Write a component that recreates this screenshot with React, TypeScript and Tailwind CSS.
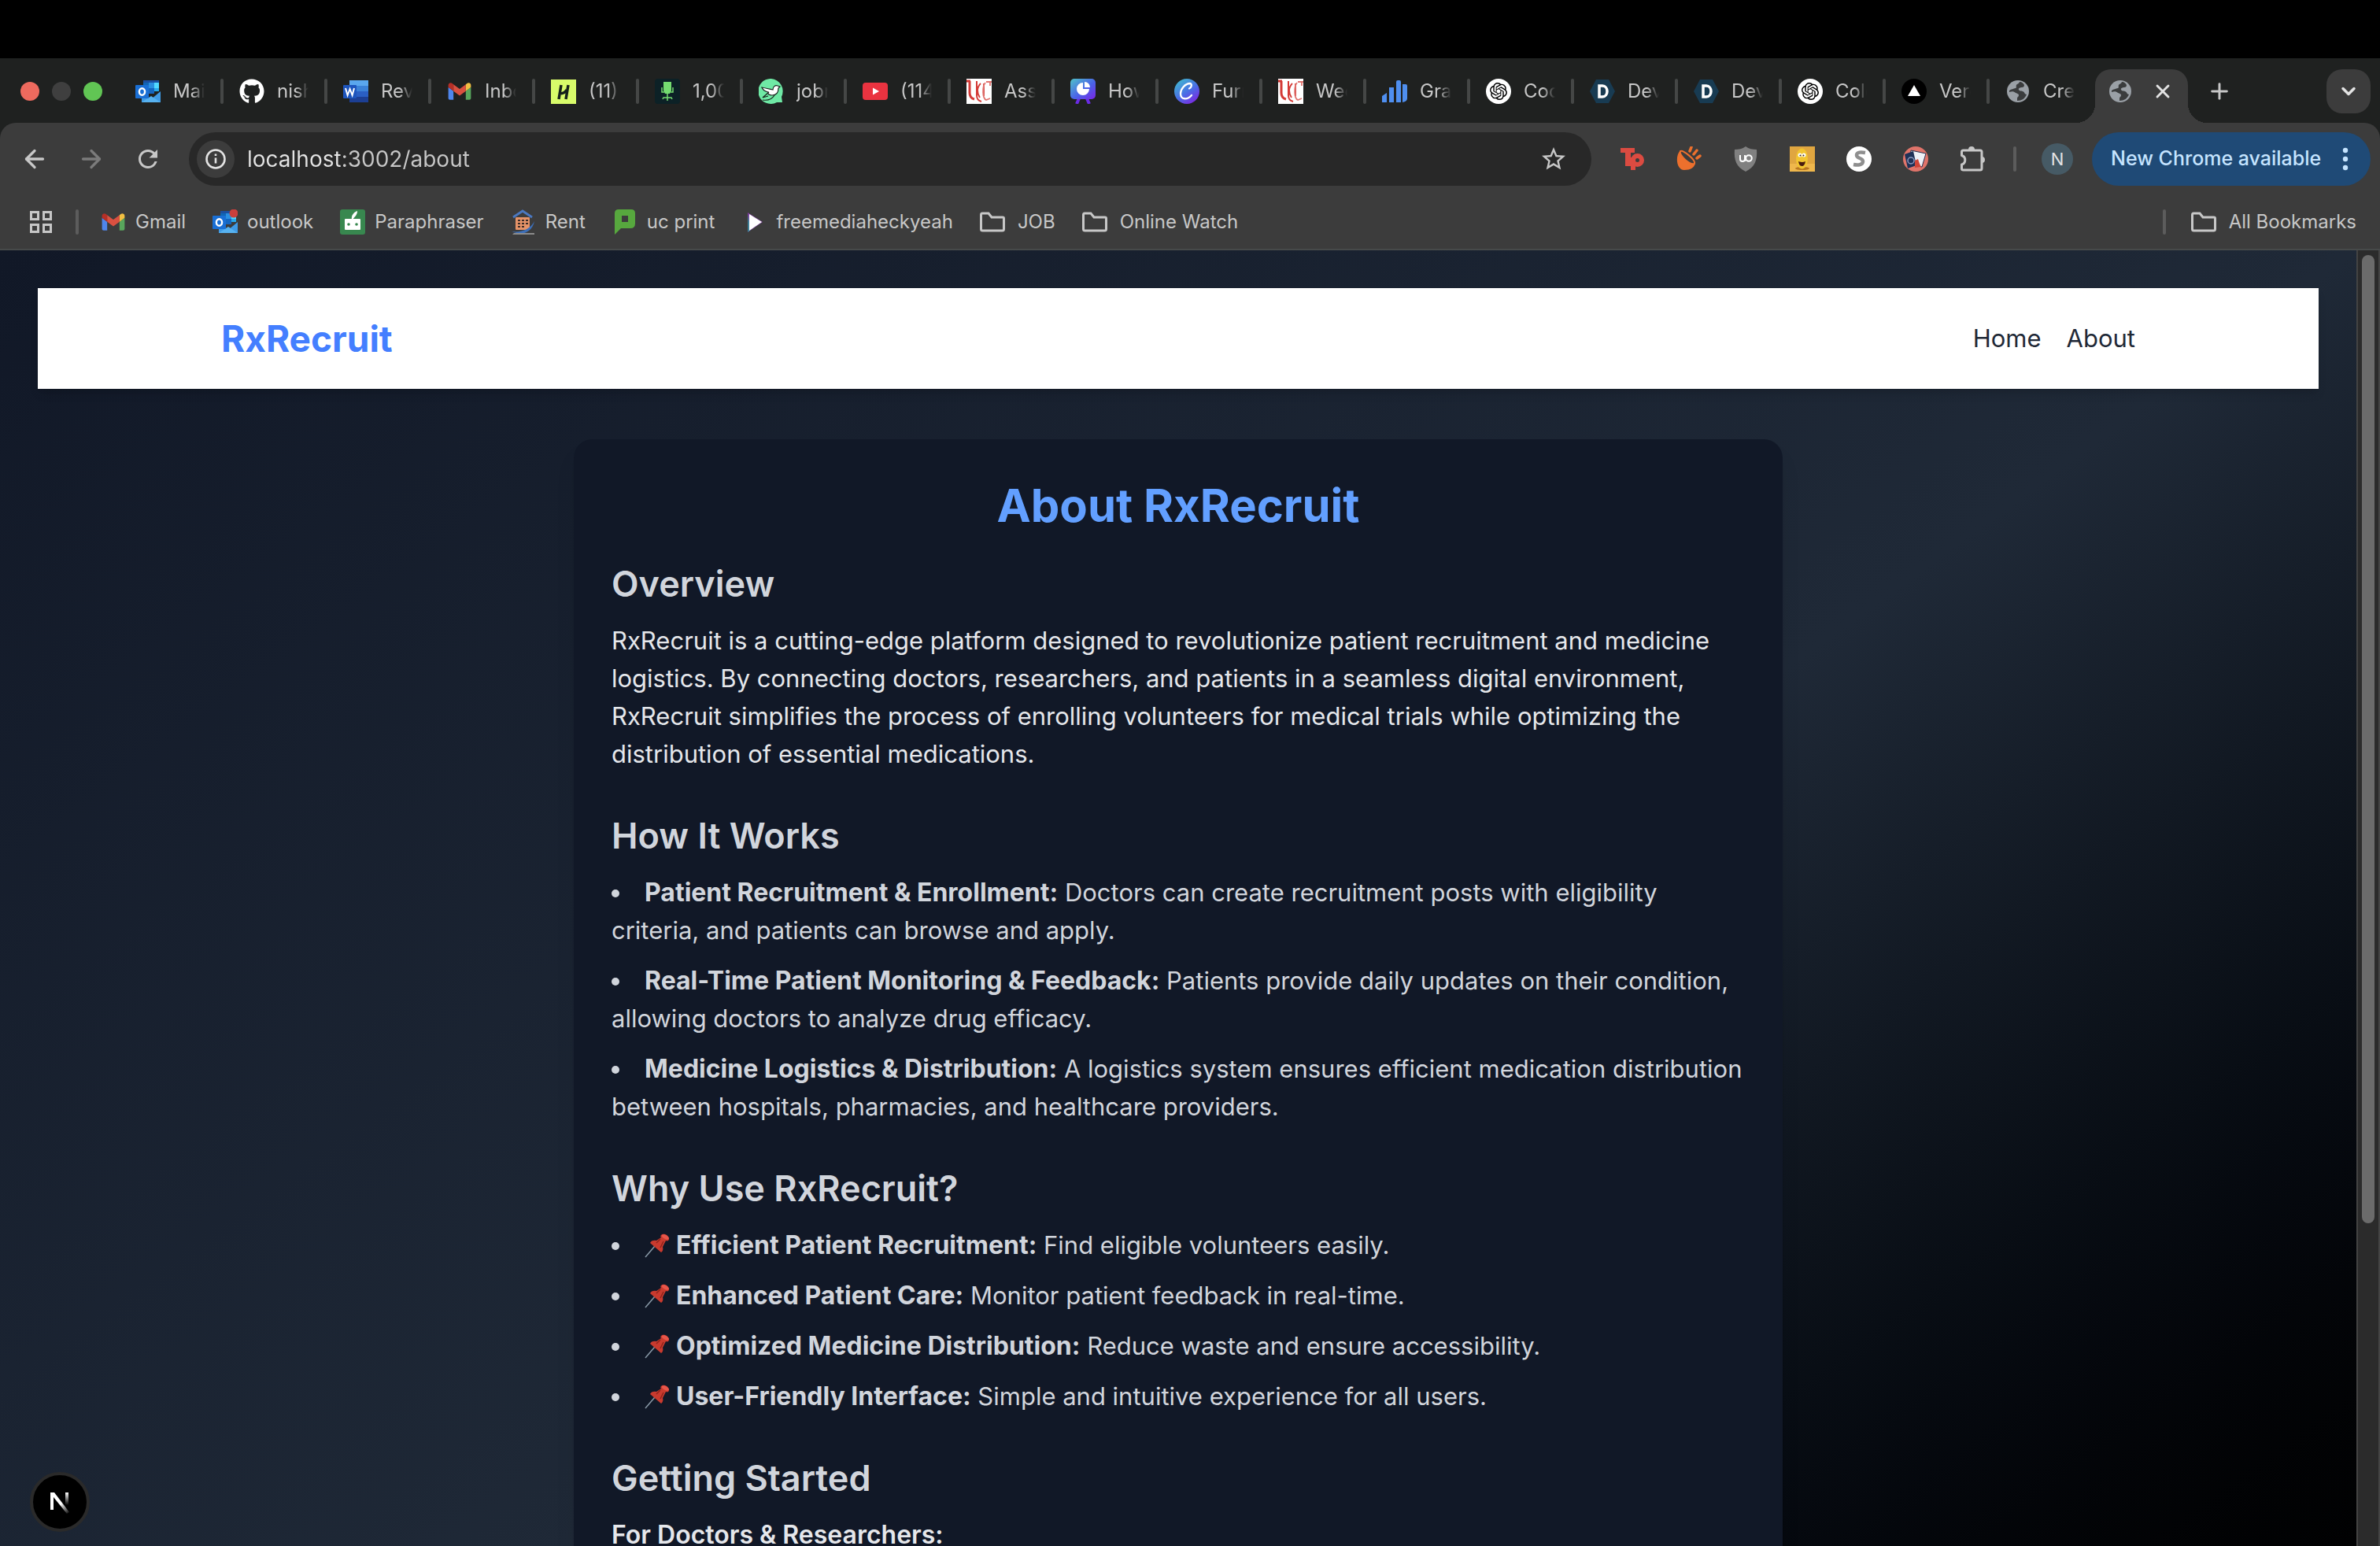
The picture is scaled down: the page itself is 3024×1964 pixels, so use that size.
import type { ReactNode } from "react";
import {
  ArrowLeft,
  ArrowRight,
  ChevronDown,
  Plus,
  X,
} from "lucide-react";
import { FaGithub } from "react-icons/fa";
import { MdRefresh, MdStarBorder } from "react-icons/md";
import { SiOpenai } from "react-icons/si";

function Icon({ children, box = "0 0 32 32" }: { children: ReactNode; box?: string }) {
  return (
    <svg viewBox={box} className="size-8 shrink-0" aria-hidden="true">
      {children}
    </svg>
  );
}

function OutlookIcon({ badge = false }: { badge?: boolean }) {
  return (
    <Icon>
      <path d="M10 2h20v14H10z" fill="#28a8ea" />
      <path d="M10 2h20v3H10z" fill="#1b4fa0" />
      <path d="M10 5h7v7h-7z" fill="#1066b5" />
      <path d="M17 5h7v7h-7z" fill="#2a8fe0" />
      <path d="M24 5h6v7h-6z" fill="#50d9ff" />
      <path d="M17 12h7v7h-7z" fill="#1566c0" />
      <path d="M8 18l12 8 12-10v14H8z" fill="#3f9be6" />
      <path d="M8 30l12-8 12 8z" fill="#57b2f0" />
      <rect y="8" width="17" height="17" rx="1" fill="#1a6fd4" />
      <ellipse cx="8.500" cy="16.500" rx="3.600" ry="4.300" fill="none" stroke="#fff" strokeWidth="2.400" />
      {badge && <circle cx="27" cy="5" r="5.500" fill="#c9403c" />}
    </Icon>
  );
}

function WordIcon() {
  return (
    <Icon>
      <path d="M8 2h24v8H8z" fill="#5aa7ee" />
      <path d="M8 9h24v7H8z" fill="#3b82d8" />
      <path d="M8 16h24v7H8z" fill="#2a5fc4" />
      <path d="M8 23h24v7H8z" fill="#1c3f94" />
      <rect y="8" width="17" height="17" rx="1" fill="#1d55bd" />
      <path d="M3 12l2.600 9 3-8 3 8L14 12" fill="none" stroke="#fff" strokeWidth="2" />
    </Icon>
  );
}

function GmailIcon() {
  return (
    <Icon box="47 26 98 98">
      <path fill="#4f86ec" d="M58 108h14V74L52 59v43c0 3.320 2.690 6 6 6" />
      <path fill="#58a65c" d="M120 108h14c3.320 0 6-2.690 6-6V59l-20 15" />
      <path fill="#f1bf42" d="M120 48v26l20-15v-8c0-7.420-8.470-11.650-14.400-7.200" />
      <path fill="#d95040" d="M72 74V48l24 18 24-18v26L96 92" />
      <path fill="#b52f26" d="M52 51v8l20 15V48l-5.600-4.200c-5.940-4.450-14.400-.220-14.400 7.200" />
    </Icon>
  );
}

function HandshakeIcon() {
  return (
    <Icon>
      <path d="M0 1h32v31H0z" fill="#d8fb6a" />
      <path d="M13 8l-3 18M22 8l-3 18M11 19c4 0 7-1 9-5" fill="none" stroke="#14201a" strokeWidth="3.500" />
    </Icon>
  );
}

function ChairIcon() {
  return (
    <Icon>
      <rect width="32" height="32" rx="4" fill="#0c2126" />
      <path d="M11 4h10v11l-2 4h-6l-2-4z" fill="#74dc70" />
      <path d="M9 11v6h3M23 11v6h-3M16 19v9M10 26l1-2h10l1 2" fill="none" stroke="#74dc70" strokeWidth="1.500" />
    </Icon>
  );
}

function BirdIcon() {
  return (
    <Icon>
      <path d="M16 0a16 16 0 1 0 7 30h7l-1-7A16 16 0 0 0 16 0z" fill="#6fe9a5" />
      <path
        d="M4 11c5 1 9 2 14 3 0-4 3-6 6-5l3 1-2 2c0 6-3 9-8 9-4 0-6-2-5-4-4-1-7-3-8-6z"
        fill="#fff"
        stroke="#17221c"
        strokeWidth="1.200"
      />
      <path d="M13 17l-8 7 7-2M5 27c7 1 12-1 15-6" fill="none" stroke="#17221c" strokeWidth="1.200" />
    </Icon>
  );
}

function YoutubeIcon() {
  return (
    <Icon>
      <rect y="5" width="32" height="22" rx="4" fill="#ea3340" />
      <path d="M13 11.500v9l8-4.500z" fill="#fff" />
    </Icon>
  );
}

function UcIcon() {
  return (
    <Icon>
      <path d="M0 0h32v32H0z" fill="#fff" />
      <path d="M0 3h5M4 3v15c0 4 2 7 6 8" fill="none" stroke="#d43a36" strokeWidth="3" />
      <path d="M13 3v18c0 4 2 7 6 8" fill="none" stroke="#d43a36" strokeWidth="2" />
      <path d="M18 6c-5 5-5 12-1 18M22 6v16" fill="none" stroke="#d43a36" strokeWidth="1.800" />
      <path d="M32 4h-7M30 3v6M24 5c-4 5-4 20 1 22l5-2" fill="none" stroke="#e0736f" strokeWidth="1.800" />
    </Icon>
  );
}

function PieBoardIcon() {
  return (
    <Icon>
      <defs>
        <linearGradient id="board" x1="0" y1="0" x2="1" y2="1">
          <stop offset="0" stopColor="#4fc3c9" />
          <stop offset="0.550" stopColor="#4a63e8" />
          <stop offset="1" stopColor="#7a25e4" />
        </linearGradient>
      </defs>
      <path d="M11 25l-3 7M21 25l3 7" stroke="#6a2be4" strokeWidth="4" />
      <rect width="32" height="26" rx="5" fill="url(#board)" />
      <path d="M16 13V5a8 8 0 1 0 8 8z" fill="#fff" />
      <path d="M18 11V4a7 7 0 0 1 7 7z" fill="#fff" />
    </Icon>
  );
}

function CanvaIcon() {
  return (
    <Icon>
      <defs>
        <linearGradient id="canva" x1="0" y1="0" x2="0.700" y2="1">
          <stop offset="0" stopColor="#3fc6cc" />
          <stop offset="0.600" stopColor="#4a6de5" />
          <stop offset="1" stopColor="#7a2be2" />
        </linearGradient>
      </defs>
      <circle cx="16" cy="16" r="16" fill="url(#canva)" />
      <path
        d="M19 12.500c3-1 4-6 1-6.500C14 6 8 13 8 19c0 8 9 8 14 2"
        fill="none"
        stroke="#fff"
        strokeWidth="2.300"
        strokeLinecap="round"
      />
    </Icon>
  );
}

function BarsIcon() {
  return (
    <Icon>
      <path
        d="M0 30V22l6-4v12zM9 30V11h6v19zM18 30V4q0-2 2-2h2q2 0 2 2v26zM26 30V7h4q2 0 2 2v16q0 4-6 5z"
        fill="#4f8ff0"
      />
    </Icon>
  );
}

function OpenAiIcon() {
  return (
    <span className="flex size-8 shrink-0 items-center justify-center rounded-full bg-white">
      <SiOpenai className="size-[22px] text-black" />
    </span>
  );
}

function DevpostIcon() {
  return (
    <Icon>
      <path d="M8 1h16l8 15-8 15H8L0 16z" fill="#183b52" />
      <path d="M12 9h4c8 0 8 14 0 14h-4z" fill="none" stroke="#fff" strokeWidth="3.500" />
    </Icon>
  );
}

function VercelIcon() {
  return (
    <Icon>
      <circle cx="16" cy="16" r="16" fill="#000" />
      <path d="M16 8l8 14H8z" fill="#fff" />
    </Icon>
  );
}

function GlobeIcon() {
  return (
    <Icon>
      <circle cx="16" cy="16" r="14" fill="#9aa0a6" />
      <path
        d="M18 4c-1 3-3 2-4 4-1 2 1 3-1 4-3 1-5 1-8 3v2c3-1 6-1 8 1 2 1 4 1 4 3s-2 2-2 4v3c6 0 10-3 12-8-3 0-2-3-5-4-2-1-4 0-5-2s2-3 4-3 3-1 3-3c-1-2-3-4-6-4z"
        fill="#3a3c3d"
      />
    </Icon>
  );
}

function ParaphraserIcon() {
  return (
    <Icon>
      <rect width="32" height="32" rx="3" fill="#38884f" />
      <rect x="6" y="12" width="20" height="14" rx="1" fill="#fff" />
      <circle cx="11" cy="19" r="1.800" fill="#38884f" />
      <circle cx="21" cy="19" r="1.800" fill="#38884f" />
      <path d="M15 13c-1-5 2-9 7-11 0 5-3 7-6 11z" fill="#fff" />
    </Icon>
  );
}

function RentIcon() {
  return (
    <Icon>
      <path d="M3 10L15 2l12 8" fill="none" stroke="#4a78c0" strokeWidth="3" />
      <rect x="6" y="10" width="18" height="16" rx="1" fill="#e59368" />
      <path d="M9 13h3v2H9zM14 13h3v2h-3zM19 13h3v2h-3zM9 17h3v2H9zM14 17h3v2h-3zM19 17h3v2h-3zM9 21h3v2H9zM14 21h3v2h-3z" fill="#3c2c28" />
      <path d="M1 28c12 2 24-3 29-13-2 10-9 16-20 16z" fill="#3d6fb8" />
      <path d="M4 30h26v2H2z" fill="#8c8c8c" />
    </Icon>
  );
}

function PaperCutIcon() {
  return (
    <Icon box="-3 0 32 32">
      <path d="M5 0h16q5 0 5 5v13q0 6-6 6H8l-8 8V5q0-5 5-5zM9 8v8h8V8z" fill="#57a83e" fillRule="evenodd" />
    </Icon>
  );
}

function PlayIcon() {
  return (
    <Icon>
      <path d="M8 4l19 12L8 29z" fill="#7b3f9c" />
      <path d="M8 7v22l4-3z" fill="#3c7f96" />
      <path d="M10 6l16 10-16 11z" fill="#fff" />
    </Icon>
  );
}

function FolderIcon() {
  return (
    <Icon>
      <path
        d="M3 5h8l4 5h14q1.500 0 1.500 1.500V25q0 2-2 2H3.500q-2 0-2-2V7q0-2 1.500-2z"
        fill="none"
        stroke="#c7c7c7"
        strokeWidth="3"
      />
    </Icon>
  );
}

function PuzzleIcon() {
  return (
    <Icon>
      <path
        d="M2.500 11.500V7q0-2 2-2H26q2 0 2 2v21q0 2-2 2H4.500q-2 0-2-2v-5a6 6 0 0 0 0-11.500z"
        fill="none"
        stroke="#c7c7c7"
        strokeWidth="3"
        strokeLinejoin="round"
      />
      <path d="M11 4a4 4 0 0 1 8 0zM28 13a4 4 0 0 1 0 8z" fill="#c7c7c7" />
    </Icon>
  );
}

function PinIcon() {
  return (
    <svg viewBox="0 0 32 32" className="mr-2 inline-block size-8 align-[-5px]" role="img" aria-label="Pin">
      <path d="M13 17L1 31" stroke="#8a9aa8" strokeWidth="1.500" />
      <path d="M21 3c3-3 10 0 10 5 0 2-2 3-4 2l-4 8c1 3 0 6-2 7L7 13c1-3 5-4 8-3l6-4c-1-1-1-2 0-3z" fill="#c93a2e" />
      <path d="M22 3c3-2 8 1 9 4 0 2-3 2-5 1s-5-3-4-5z" fill="#e8564a" />
      <path d="M20 8l-5 5M24 11l-4 8" stroke="#8f241c" strokeWidth="1.500" />
    </svg>
  );
}

const TABS: { label: string; icon: ReactNode }[] = [
  { label: "Mail", icon: <OutlookIcon /> },
  { label: "nish", icon: <FaGithub className="size-8 shrink-0 text-white" /> },
  { label: "Revi", icon: <WordIcon /> },
  { label: "Inbox", icon: <GmailIcon /> },
  { label: "(11) H", icon: <HandshakeIcon /> },
  { label: "1,00", icon: <ChairIcon /> },
  { label: "jobri", icon: <BirdIcon /> },
  { label: "(114)", icon: <YoutubeIcon /> },
  { label: "Assi", icon: <UcIcon /> },
  { label: "How", icon: <PieBoardIcon /> },
  { label: "Furn", icon: <CanvaIcon /> },
  { label: "Wee", icon: <UcIcon /> },
  { label: "Grad", icon: <BarsIcon /> },
  { label: "Cod", icon: <OpenAiIcon /> },
  { label: "Dev", icon: <DevpostIcon /> },
  { label: "Dev", icon: <DevpostIcon /> },
  { label: "Colo", icon: <OpenAiIcon /> },
  { label: "Verc", icon: <VercelIcon /> },
  { label: "Crea", icon: <GlobeIcon /> },
];

const BOOKMARKS: { label: string; icon: ReactNode }[] = [
  { label: "Gmail", icon: <GmailIcon /> },
  { label: "outlook", icon: <OutlookIcon badge /> },
  { label: "Paraphraser", icon: <ParaphraserIcon /> },
  { label: "Rent", icon: <RentIcon /> },
  { label: "uc print", icon: <PaperCutIcon /> },
  { label: "freemediaheckyeah", icon: <PlayIcon /> },
];

const FOLDERS = ["JOB", "Online Watch"];

const EXTENSIONS: { name: string; icon: ReactNode }[] = [
  {
    name: "Tp",
    icon: (
      <Icon>
        <path d="M1 2h18v6h-5v17H7V8H1z" fill="#db4b41" />
        <circle cx="22.500" cy="17.500" r="5.500" fill="none" stroke="#db4b41" strokeWidth="6" />
        <path d="M14 14h6v16h-6z" fill="#db4b41" />
      </Icon>
    ),
  },
  {
    name: "Honk",
    icon: (
      <Icon>
        <path d="M5 5c-7 7-5 25 5 25 8 0 13-3 14-9C18 20 9 12 5 5z" fill="#ec702d" />
        <path d="M5 6c3-2 20 11 18 16-6 2-20-11-18-16z" fill="#3c3c3c" stroke="#ec702d" strokeWidth="2" />
        <path d="M17 6l2-5M22 10l4-5M26 15l4-3" stroke="#ec702d" strokeWidth="3.500" strokeLinecap="round" />
      </Icon>
    ),
  },
  {
    name: "uBlock",
    icon: (
      <Icon>
        <path d="M16 0c4 3 9 4 14 4 1 13-2 22-14 28C4 26 1 17 2 4c5 0 10-1 14-4z" fill="#808080" />
        <path d="M9 11v5q0 3 3 3t3-3v-5M15 11v8" fill="none" stroke="#fff" strokeWidth="2" />
        <circle cx="20" cy="15" r="3.800" fill="none" stroke="#fff" strokeWidth="2" />
      </Icon>
    ),
  },
  {
    name: "Smile",
    icon: (
      <Icon>
        <path d="M0 0h32v32H0z" fill="#e0a640" />
        <path d="M0 22h32v10H0z" fill="#efb74c" />
        <ellipse cx="16" cy="28" rx="9" ry="2" fill="#b8761f" />
        <ellipse cx="15.500" cy="15.500" rx="7.500" ry="13" fill="#f2c530" />
        <circle cx="13" cy="11" r="2.500" fill="#fff" />
        <circle cx="18" cy="11" r="2.500" fill="#fff" />
        <circle cx="13.500" cy="11.500" r="1" fill="#3a2410" />
        <circle cx="17.500" cy="11.500" r="1" fill="#3a2410" />
        <path d="M11 19q5 2 9 0-1 6-4.500 6T11 19z" fill="#4a1d10" />
      </Icon>
    ),
  },
  {
    name: "Scribe",
    icon: (
      <Icon>
        <circle cx="16" cy="16" r="16" fill="#fff" />
        <path d="M24 8c-5-1-11-1-11 3 0 5 8 3 8 8 0 5-7 5-12 4" fill="none" stroke="#8f8f8f" strokeWidth="4.500" />
      </Icon>
    ),
  },
  {
    name: "Passport",
    icon: (
      <Icon>
        <circle cx="16" cy="16" r="16" fill="#e0746a" />
        <path d="M10 5l19 4-5 17-15-3z" fill="#eef0f6" stroke="#26304f" strokeWidth="1" />
        <path d="M2 10l11-4 4 18-11 4z" fill="#1f3157" />
        <circle cx="10" cy="18" r="4" fill="none" stroke="#8b9ac0" strokeWidth="1.500" />
        <path d="M15 18l4-2 2 6 2 4-8 1z" fill="#cf4438" />
      </Icon>
    ),
  },
  { name: "Extensions", icon: <PuzzleIcon /> },
];

const HOW_IT_WORKS = [
  {
    title: "Patient Recruitment & Enrollment:",
    text: "Doctors can create recruitment posts with eligibility criteria, and patients can browse and apply.",
  },
  {
    title: "Real-Time Patient Monitoring & Feedback:",
    text: "Patients provide daily updates on their condition, allowing doctors to analyze drug efficacy.",
  },
  {
    title: "Medicine Logistics & Distribution:",
    text: "A logistics system ensures efficient medication distribution between hospitals, pharmacies, and healthcare providers.",
  },
];

const REASONS = [
  { title: "Efficient Patient Recruitment:", text: "Find eligible volunteers easily." },
  { title: "Enhanced Patient Care:", text: "Monitor patient feedback in real-time." },
  { title: "Optimized Medicine Distribution:", text: "Reduce waste and ensure accessibility." },
  { title: "User-Friendly Interface:", text: "Simple and intuitive experience for all users." },
];

function TabStrip() {
  return (
    <div className="flex items-start pt-[14px] pr-3">
      <div className="flex h-14 w-38 shrink-0 items-center gap-4 pl-[26px]">
        <span className="size-6 rounded-full bg-[#ed6a5e]" />
        <span className="size-6 rounded-full bg-[#3f3f3f]" />
        <span className="size-6 rounded-full bg-[#61c554]" />
      </div>
      <div role="tablist" className="flex">
        {TABS.map((tab, i) => (
          <button
            key={i}
            role="tab"
            aria-selected="false"
            className="flex h-14 w-33 shrink-0 items-center gap-4 pl-5"
          >
            {tab.icon}
            <span className="w-10 overflow-hidden mask-r-from-60% text-left text-2xl whitespace-nowrap text-[#c7c7c7]">
              {tab.label}
            </span>
            {i < TABS.length - 1 && <span className="ml-1 h-8 w-1 shrink-0 rounded-full bg-[#454746]" />}
          </button>
        ))}
        <div className="relative ml-0.5 flex h-17 w-[118px] items-start rounded-t-[20px] bg-[#3c3c3c]">
          <span className="absolute bottom-0 -left-6 size-6 bg-[radial-gradient(circle_at_0_0,transparent_24px,#3c3c3c_24px)]" />
          <span className="absolute -right-6 bottom-0 size-6 bg-[radial-gradient(circle_at_100%_0,transparent_24px,#3c3c3c_24px)]" />
          <button role="tab" aria-selected="true" aria-label="About" className="flex h-14 items-center pl-4">
            <GlobeIcon />
          </button>
          <button aria-label="Close tab" className="ml-6 flex h-14 items-center text-[#e3e3e3]">
            <X className="size-7" strokeWidth={2.5} />
          </button>
        </div>
      </div>
      <button aria-label="New tab" className="ml-6 flex h-14 items-center text-[#c7c7c7]">
        <Plus className="size-8" strokeWidth={2.2} />
      </button>
      <button
        aria-label="Search tabs"
        className="ml-auto flex size-14 items-center justify-center rounded-[20px] bg-[#3c3c3c] text-[#e3e3e3]"
      >
        <ChevronDown className="size-7" strokeWidth={3} />
      </button>
    </div>
  );
}

function Toolbar() {
  return (
    <div className="flex h-17 items-center pr-3 pl-2 text-[#c7c7c7]">
      <button aria-label="Back" className="flex w-18 justify-center">
        <ArrowLeft className="size-9" strokeWidth={2.2} />
      </button>
      <button aria-label="Forward" className="flex w-18 justify-center text-[#7b7b7b]">
        <ArrowRight className="size-9" strokeWidth={2.2} />
      </button>
      <button aria-label="Reload" className="flex w-18 justify-center">
        <MdRefresh className="size-9" />
      </button>
      <div className="ml-4 flex h-17 flex-1 items-center rounded-full bg-[#282828] pr-[30px] pl-[10px]">
        <button
          aria-label="Site information"
          className="flex size-12 shrink-0 items-center justify-center rounded-full bg-[#3c3c3c]"
        >
          <svg viewBox="0 0 26 26" className="size-[26px]" aria-hidden="true">
            <circle cx="13" cy="13" r="11.500" fill="none" stroke="#e3e3e3" strokeWidth="2.600" />
            <path d="M13 11.500v7M13 6.500v2.500" stroke="#e3e3e3" strokeWidth="2.600" />
          </svg>
        </button>
        <input
          aria-label="Address"
          defaultValue="localhost:3002/about"
          className="ml-4 min-w-0 flex-1 bg-[linear-gradient(90deg,#e3e3e3_118px,#c7c7c7_118px)] bg-clip-text text-[28px] text-transparent outline-none"
        />
        <button aria-label="Bookmark this page">
          <MdStarBorder className="size-9" />
        </button>
      </div>
      <div className="ml-4 flex">
        {EXTENSIONS.map((ext) => (
          <button key={ext.name} aria-label={ext.name} className="flex w-18 items-center justify-center">
            {ext.icon}
          </button>
        ))}
      </div>
      <span className="ml-4 h-8 w-1 rounded-full bg-[#5c5c5c]" />
      <button className="ml-8 flex size-10 items-center justify-center rounded-full bg-[#465a65] text-[22px] text-[#e3e3e3]">
        N
      </button>
      <button className="ml-6 flex h-17 w-[354px] items-center justify-between rounded-full bg-[#1f4a76] pr-7 pl-6 text-[25px] font-medium text-[#c5e4ff]">
        <span className="whitespace-nowrap">New Chrome available</span>
        <svg viewBox="0 0 8 30" className="h-[30px] w-2" fill="#c5e4ff" aria-hidden="true">
          <circle cx="4" cy="4" r="3.200" />
          <circle cx="4" cy="15" r="3.200" />
          <circle cx="4" cy="26" r="3.200" />
        </svg>
      </button>
    </div>
  );
}

function BookmarkBar() {
  return (
    <nav
      aria-label="Bookmarks"
      className="mt-3 flex h-[70px] items-center border-b-2 border-[#474a4a] pr-[30px] pl-[38px] text-2xl text-[#c7c7c7]"
    >
      <button aria-label="Apps">
        <svg viewBox="0 0 28 28" className="size-7" fill="none" stroke="#c7c7c7" strokeWidth="3" aria-hidden="true">
          <path d="M1.500 1.500h9v9h-9zM17.500 1.500h9v9h-9zM1.500 17.500h9v9h-9zM17.500 17.500h9v9h-9z" />
        </svg>
      </button>
      <span className="mr-7 ml-[30px] h-8 w-1 rounded-full bg-[#5c5c5c]" />
      <div className="flex gap-[34px]">
        {BOOKMARKS.map((bookmark) => (
          <a key={bookmark.label} href="#" className="flex items-center gap-3 whitespace-nowrap">
            {bookmark.icon}
            {bookmark.label}
          </a>
        ))}
        {FOLDERS.map((folder) => (
          <button key={folder} className="flex items-center gap-4 whitespace-nowrap">
            <FolderIcon />
            {folder}
          </button>
        ))}
      </div>
      <span className="mr-8 ml-auto h-8 w-1 rounded-full bg-[#5c5c5c]" />
      <button className="flex items-center gap-4">
        <FolderIcon />
        All Bookmarks
      </button>
    </nav>
  );
}

function Section({ title, children }: { title: string; children: ReactNode }) {
  return (
    <section className="mb-12">
      <h2 className="mb-4 text-[45px]/[64px] font-semibold text-gray-300">{title}</h2>
      {children}
    </section>
  );
}

function AboutPage() {
  return (
    <div className="min-h-[2196px] bg-linear-to-br from-[#111827] via-[#1f2937] to-black p-12 text-[31px]/[48px] text-gray-200">
      <header className="bg-white shadow-[0_8px_12px_-2px_rgba(0,0,0,0.1),0_4px_8px_-4px_rgba(0,0,0,0.1)]">
        <div className="mx-auto flex h-32 max-w-[2560px] items-center justify-between px-16">
          <a href="#" className="text-[46px]/[64px] font-bold text-[#447fff]">
            RxRecruit
          </a>
          <nav className="flex gap-8 text-[#1f2937]">
            <a href="#">Home</a>
            <a href="#">About</a>
          </nav>
        </div>
      </header>

      <main className="mx-auto mt-16 max-w-[1536px] rounded-3xl bg-[#111827] p-12 shadow-[0_20px_30px_-6px_rgba(0,0,0,0.1),0_8px_12px_-8px_rgba(0,0,0,0.1)]">
        <h1 className="mb-8 text-center text-[58px]/[72px] font-bold text-[#629fff]">About RxRecruit</h1>

        <Section title="Overview">
          <p>
            RxRecruit is a cutting-edge platform designed to revolutionize patient recruitment and medicine logistics.
            By connecting doctors, researchers, and patients in a seamless digital environment, RxRecruit simplifies
            the process of enrolling volunteers for medical trials while optimizing the distribution of essential
            medications.
          </p>
        </Section>

        <Section title="How It Works">
          <ul className="list-inside list-disc space-y-4 text-gray-300">
            {HOW_IT_WORKS.map((item) => (
              <li key={item.title}>
                <strong className="text-[32px]">{item.title}</strong> {item.text}
              </li>
            ))}
          </ul>
        </Section>

        <Section title="Why Use RxRecruit?">
          <ul className="list-inside list-disc space-y-4 text-gray-300">
            {REASONS.map((item) => (
              <li key={item.title}>
                <PinIcon />
                <strong className="text-[32px]">{item.title}</strong> {item.text}
              </li>
            ))}
          </ul>
        </Section>

        <Section title="Getting Started">
          <h3 className="text-[32px]/[48px] font-semibold">For Doctors &amp; Researchers:</h3>
        </Section>
      </main>
    </div>
  );
}

function NextBadge() {
  return (
    <button
      aria-label="Open Next.js Dev Tools"
      className="absolute bottom-[18px] left-[38px] flex size-19 items-center justify-center rounded-full border-4 border-[#2a2a2a] bg-black"
    >
      <svg viewBox="0 0 28 30" className="h-[30px] w-7" fill="none" aria-hidden="true">
        <defs>
          <linearGradient id="stem" x1="0" y1="0" x2="0" y2="1">
            <stop stopColor="#fff" />
            <stop offset="1" stopColor="#fff" stopOpacity="0" />
          </linearGradient>
          <linearGradient id="diagonal" gradientUnits="userSpaceOnUse" x1="16" y1="17" x2="26" y2="30">
            <stop stopColor="#fff" />
            <stop offset="1" stopColor="#fff" stopOpacity="0" />
          </linearGradient>
        </defs>
        <path d="M2 3h4v22H2z" fill="#fff" />
        <path d="M2 3h5l19 25-3 2L2 4z" fill="url(#diagonal)" />
        <path d="M21 3h4v16h-4z" fill="url(#stem)" />
      </svg>
    </button>
  );
}

export default function App() {
  return (
    <div className="relative flex h-screen flex-col overflow-hidden bg-black pt-[74px] font-[Inter,sans-serif]">
      <div className="shrink-0 bg-[#1f2120]">
        <TabStrip />
        <div className="rounded-t-[20px] bg-[#3c3c3c] pt-3">
          <Toolbar />
          <BookmarkBar />
        </div>
      </div>
      <div className="flex min-h-0 flex-1">
        <div className="min-w-0 flex-1 overflow-hidden">
          <AboutPage />
        </div>
        <div className="w-[30px] shrink-0 border-r-2 border-l-2 border-[#444444] bg-[#2b2b2b] px-1 pt-[6px]">
          <div className="mx-auto h-3/4 w-4 rounded-full bg-[#6b6b6b]" />
        </div>
      </div>
      <NextBadge />
    </div>
  );
}
